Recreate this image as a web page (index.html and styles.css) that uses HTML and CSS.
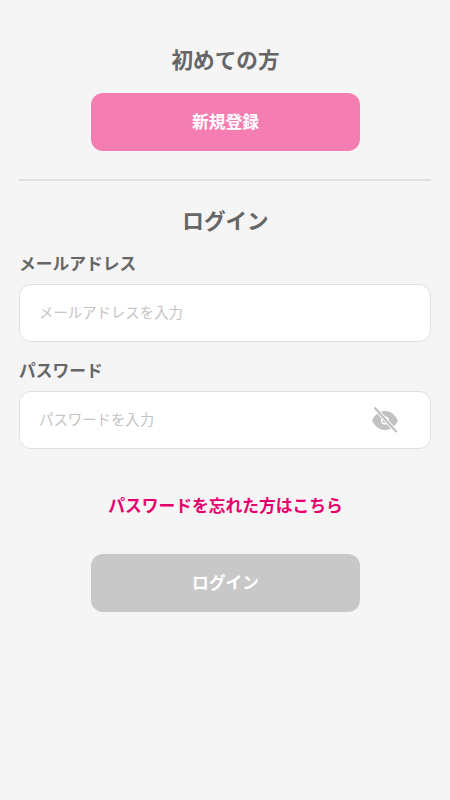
FILE: index.html
```html
<!DOCTYPE html>
<html lang="ja">
<head>
<meta charset="utf-8">
<title>ログイン</title>
<link rel="stylesheet" href="styles.css">
</head>
<body>
<main class="page">
  <section class="signup">
    <h2 class="title">初めての方</h2>
    <button class="btn btn-pink" type="button">新規登録</button>
  </section>
  <hr class="divider">
  <section class="login">
    <h2 class="title">ログイン</h2>
    <label class="label" for="email">メールアドレス</label>
    <div class="field"><input id="email" class="input" type="text" placeholder="メールアドレスを入力"></div>
    <label class="label label-pw" for="pw">パスワード</label>
    <div class="field">
      <input id="pw" class="input" type="password" placeholder="パスワードを入力">
      <svg class="eye" viewBox="0 0 26 26" width="26" height="26" aria-hidden="true">
        <path fill="#c2c2c2" fill-rule="evenodd" d="M0 13.5C3 7 8 4 13 4s10 3 13 9.5C23 20 18 23 13 23S3 20 0 13.5zM13 9.5a4 4 0 1 0 0 8 4 4 0 0 0 0-8z"/>
        <circle cx="13" cy="13.5" r="2.6" fill="#c2c2c2"/>
        <path d="M2.5 0.5 24.5 25" stroke="#fff" stroke-width="4" fill="none"/>
        <path d="M2.5 0.5 24.5 25" stroke="#c2c2c2" stroke-width="2.4" fill="none"/>
      </svg>
    </div>
    <a class="forgot" href="#">パスワードを忘れた方はこちら</a>
    <button class="btn btn-gray" type="button">ログイン</button>
  </section>
</main>
</body>
</html>
```
FILE: styles.css
```css
* { box-sizing: border-box; }
html, body { margin: 0; height: 100%; }
body {
  background: #f5f5f5;
  font-family: "Noto Sans CJK JP", "Noto Sans", sans-serif;
  color: #666;
}
.page { padding: 43px 19px 0; }
.signup, .login { display: flex; flex-direction: column; }
.title {
  margin: 0;
  padding-left: 1px;
  font-size: 21.6px;
  line-height: 32px;
  font-weight: 700;
  text-align: center;
  color: #666;
}
.btn {
  display: block;
  width: 269px;
  height: 58px;
  margin: 0 auto;
  padding: 0 0 3px 1px;
  border: 0;
  border-radius: 12px;
  color: #fff;
  font-family: inherit;
  font-size: 16.8px;
  font-weight: 700;
}
.btn-pink { margin-top: 18px; background: #f47eb2; }
.btn-gray { margin-top: 36px; background: #c8c8c8; }
.divider {
  margin: 28px 0 0;
  border: 0;
  height: 2px;
  background: #e0e0e0;
}
.login { margin-top: 23px; }
.label {
  margin-top: 15px;
  font-size: 16.75px;
  line-height: 25px;
  font-weight: 700;
  color: #666;
}
.label-pw { margin-top: 16px; }
.field { position: relative; margin-top: 8px; }
.input {
  display: block;
  width: 100%;
  height: 58px;
  padding: 0 60px 4px 19px;
  background: #fff;
  border: 1.5px solid #e0e0e0;
  border-radius: 12px;
  outline: 0;
  font-family: inherit;
  font-size: 14.4px;
  color: #666;
}
.input::placeholder { color: #c4c4c4; opacity: 1; }
.eye { position: absolute; right: 33px; top: 16px; }
.forgot {
  margin-top: 44px;
  padding-left: 1px;
  font-size: 16.75px;
  line-height: 25px;
  font-weight: 700;
  text-align: center;
  text-decoration: none;
  color: #e6006e;
}
```
